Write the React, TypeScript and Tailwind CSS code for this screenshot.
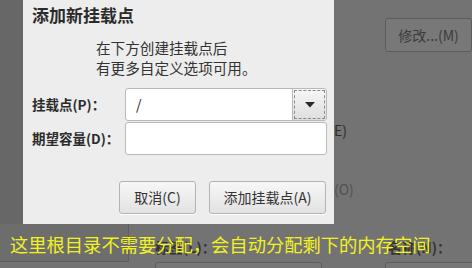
import React from "react";

const font = { fontFamily: '"Noto Sans CJK SC", "Noto Sans", sans-serif' };

export default function App() {
  return (
    <div
      className="relative w-[472px] h-[268px] overflow-hidden bg-[#737373] flex"
      style={font}
    >
      {/* background: left panel */}
      <div className="w-[129px] h-[262px] shrink-0 bg-[#6d6d6d] border-r border-b border-[#5f5f5f] flex">
        <div className="w-[23px] h-[224px] bg-[#676767]" />
      </div>
      {/* background: right panel */}
      <div className="flex-1 min-w-0 pl-[26px] pt-[18px] text-[14px] leading-[20px]">
        <div className="flex">
          <div className="ml-[230px] w-[87px] h-[34px] shrink-0 rounded-[3px] border border-[#5c5c5c] bg-[#787878] flex items-center justify-center text-[#3b3b3b]">
            修改...(M)
          </div>
        </div>
        <div className="mt-[68px] ml-[179px] text-[#2c2c2c] whitespace-nowrap">E)</div>
        <div className="mt-[39px] ml-[179px] text-[#515151] whitespace-nowrap">(O)</div>
        <div className="mt-[38px] flex whitespace-nowrap text-[#333] font-bold">
          <span className="w-[233px] shrink-0">标签(L)：</span>
          <span>名称(N)：</span>
        </div>
        <div className="mt-[5px] flex">
          <div className="w-[167px] h-[20px] shrink-0 border border-[#5e5e5e] rounded-t-[3px] bg-[#777]" />
          <div className="ml-[63px] w-[90px] h-[20px] shrink-0 border border-[#5e5e5e] rounded-t-[3px] bg-[#777]" />
        </div>
      </div>

      {/* dialog window */}
      <div className="absolute left-[23px] top-0 w-[311px] h-[224px] bg-[#ededed] flex flex-col text-[#2e2e2e]">
        <div className="pl-[9px] pt-[3px] text-[17px] leading-[24px] font-bold text-[#2b2b2b]">
          添加新挂载点
        </div>
        <div className="pl-[73px] mt-[11px] text-[14.6px] leading-[20px] text-[#333]">
          <div>在下方创建挂载点后</div>
          <div>有更多自定义选项可用。</div>
        </div>
        <div className="mt-[10px] flex flex-col gap-[1px]">
          <div className="flex items-center">
            <div className="w-[102px] pl-[9px] text-[13.5px] font-bold text-[#2b2b2b] whitespace-nowrap">
              挂载点(P)：
            </div>
            <div className="w-[202px] h-[33px] flex rounded-[3px] border border-[#b9b9b9] bg-white overflow-hidden">
              <div className="flex-1 flex items-center pl-[10px] text-[14px] text-[#222]">/</div>
              <div className="w-[34px] h-full p-[1px] bg-gradient-to-b from-[#f7f7f7] to-[#dedede] border-l border-[#b9b9b9]">
                <div className="w-full h-full border border-dashed border-[#8a8a8a] flex items-center justify-center">
                  <svg width="10" height="6" viewBox="0 0 10 6">
                    <path d="M0 0 L10 0 L5 5.5 Z" fill="#2a2a2a" />
                  </svg>
                </div>
              </div>
            </div>
          </div>
          <div className="flex items-center">
            <div className="w-[102px] pl-[9px] text-[13.5px] font-bold text-[#2b2b2b] whitespace-nowrap">
              期望容量(D)：
            </div>
            <div className="w-[202px] h-[33px] rounded-[3px] border border-[#b9b9b9] bg-white" />
          </div>
        </div>
        <div className="mt-[26px] flex pl-[96px] gap-[13px] text-[14px] text-[#333]">
          <div className="w-[77px] h-[33px] rounded-[3px] border border-[#b3b3b3] bg-gradient-to-b from-[#f7f7f7] to-[#e2e2e2] shadow-[0_1px_0_#fff] flex items-center justify-center">
            取消(C)
          </div>
          <div className="w-[117px] h-[33px] rounded-[3px] border border-[#b3b3b3] bg-gradient-to-b from-[#f7f7f7] to-[#e2e2e2] shadow-[0_1px_0_#fff] flex items-center justify-center">
            添加挂载点(A)
          </div>
        </div>
      </div>

      {/* annotation */}
      <div className="absolute left-[10px] top-[232px] text-[18.3px] leading-[24px] text-[#f2f21e] whitespace-nowrap">
        这里根目录不需要分配，会自动分配剩下的内存空间
      </div>
    </div>
  );
}
